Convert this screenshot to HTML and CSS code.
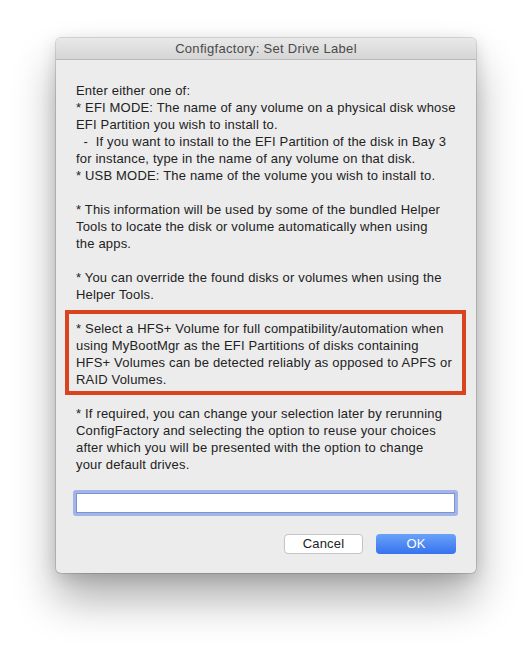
FILE: index.html
```html
<!DOCTYPE html>
<html>
<head>
<meta charset="utf-8">
<link rel="stylesheet" href="styles.css">
</head>
<body>
<div class="window">
  <div class="titlebar">Configfactory: Set Drive Label</div>
  <div class="content">
    <p class="para">Enter either one of:<br>* EFI MODE: The name of any volume on a physical disk whose<br>EFI Partition you wish to install to.<br>&nbsp;&nbsp;-&nbsp; If you want to install to the EFI Partition of the disk in Bay 3<br>for instance, type in the name of any volume on that disk.<br>* USB MODE: The name of the volume you wish to install to.</p>
    <p class="para">* This information will be used by some of the bundled Helper<br>Tools to locate the disk or volume automatically when using<br>the apps.</p>
    <p class="para">* You can override the found disks or volumes when using the<br>Helper Tools.</p>
    <p class="para highlight">* Select a HFS+ Volume for full compatibility/automation when<br>using MyBootMgr as the EFI Partitions of disks containing<br>HFS+ Volumes can be detected reliably as opposed to APFS or<br>RAID Volumes.</p>
    <p class="para">* If required, you can change your selection later by rerunning<br>ConfigFactory and selecting the option to reuse your choices<br>after which you will be presented with the option to change<br>your default drives.</p>
    <div class="field"><div class="input"></div></div>
    <div class="buttons">
      <div class="btn cancel">Cancel</div>
      <div class="btn ok">OK</div>
    </div>
  </div>
</div>
</body>
</html>
```
FILE: styles.css
```css
html, body {
  margin: 0;
  padding: 0;
  background: #ffffff;
}
body {
  min-height: 647px;
  box-sizing: border-box;
  padding: 38px 0 0 56px;
  font-family: "Liberation Sans", Arial, sans-serif;
  font-size: 13px;
  color: #222222;
}
.window {
  width: 420px;
  height: 535px;
  box-sizing: border-box;
  background: #ececec;
  border-radius: 5px;
  box-shadow: 0 0 0 1px rgba(0,0,0,0.13), 0 26px 44px rgba(0,0,0,0.32), 0 4px 16px rgba(0,0,0,0.14);
  display: flex;
  flex-direction: column;
  overflow: hidden;
}
.titlebar {
  height: 21px;
  line-height: 22px;
  text-align: center;
  color: #4a4a4a;
  background: linear-gradient(#e9e9e9, #d5d5d5);
  border-bottom: 1px solid #b9b9b9;
  font-size: 13px;
  letter-spacing: 0.3px;
}
.content {
  padding: 22px 20px 21px 20px;
  display: flex;
  flex-direction: column;
  flex: 1;
}
.para {
  margin: 0 0 17px 0;
  line-height: 17px;
  white-space: nowrap;
  letter-spacing: 0.18px;
}
.highlight {
  position: relative;
}
.highlight::before {
  content: "";
  position: absolute;
  left: -11px;
  right: -10px;
  top: -10px;
  bottom: -7px;
  border: 4px solid #d9441f;
}
.field {
  border: 3px solid #a3b5e8;
  border-radius: 3px;
  margin-left: -3px;
  margin-right: -2px;
}
.input {
  height: 20px;
  background: #ffffff;
  border: 1px solid #7d93d0;
  box-sizing: border-box;
}
.buttons {
  display: flex;
  justify-content: flex-end;
  gap: 13px;
  margin-top: 18px;
}
.btn {
  width: 79px;
  height: 20px;
  box-sizing: border-box;
  border-radius: 4px;
  text-align: center;
  line-height: 20px;
  font-size: 13px;
  letter-spacing: 0.2px;
}
.cancel {
  background: #ffffff;
  border: 1px solid #c4c4c4;
  line-height: 18px;
  color: #222;
}
.ok {
  width: 80px;
  color: #ffffff;
  background: linear-gradient(#6aa2f9, #3673ef);
}
```
